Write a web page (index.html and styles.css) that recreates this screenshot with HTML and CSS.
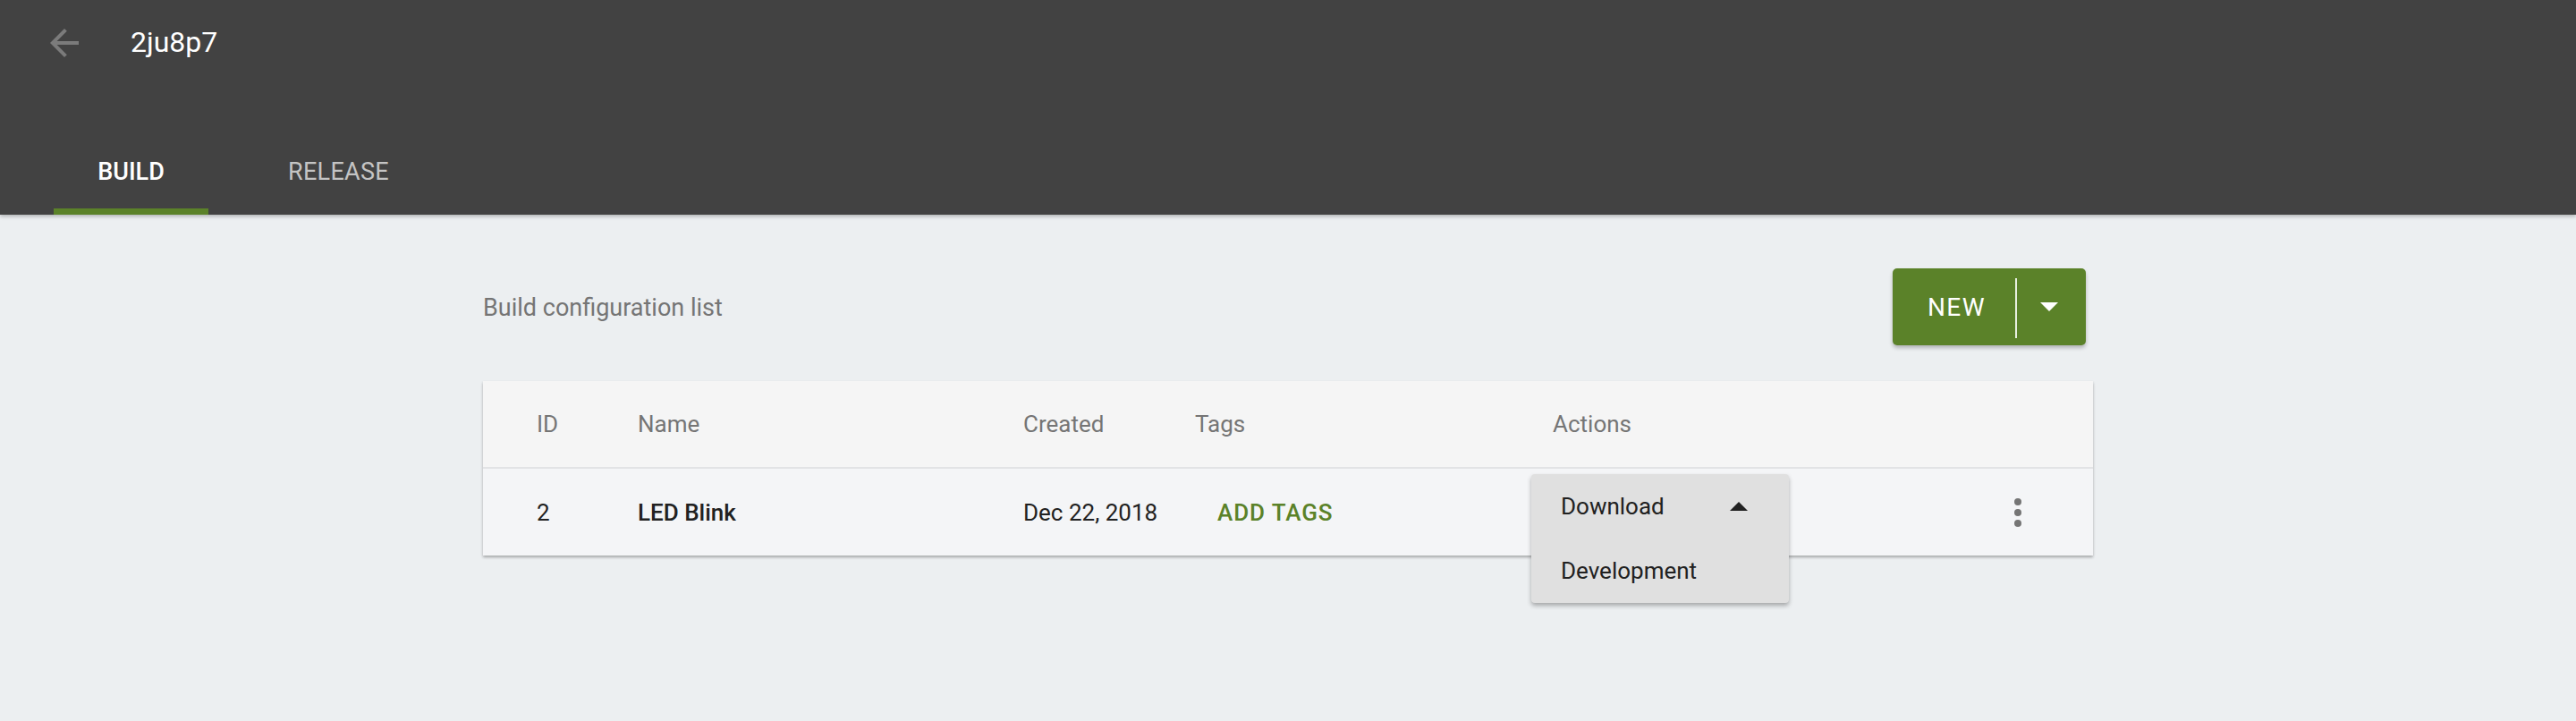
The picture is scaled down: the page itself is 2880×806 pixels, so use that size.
FILE: index.html
```html
<!DOCTYPE html>
<html lang="en">
<head>
  <meta charset="UTF-8">
  <title>2ju8p7 - Build</title>
  <link rel="stylesheet" href="styles.css">
</head>
<body>
  <header class="appbar">
    <div class="toolbar">
      <button class="back" aria-label="Back">
        <svg viewBox="0 0 24 24" width="48" height="48"><path d="M20 11H7.83l5.59-5.59L12 4l-8 8 8 8 1.41-1.41L7.83 13H20v-2z"/></svg>
      </button>
      <span class="title">2ju8p7</span>
    </div>
    <nav class="tabs">
      <a class="tab active">BUILD</a>
      <a class="tab">RELEASE</a>
    </nav>
  </header>

  <main class="content">
    <div class="list-head">
      <span class="list-title">Build configuration list</span>
      <div class="split-btn">
        <button class="split-main">NEW</button>
        <span class="split-divider"></span>
        <button class="split-caret" aria-label="More">
          <svg viewBox="0 0 20 10" width="20" height="10"><path d="M0 0h20L10 10z"/></svg>
        </button>
      </div>
    </div>

    <div class="card">
      <div class="grid head">
        <div>ID</div>
        <div>Name</div>
        <div>Created</div>
        <div>Tags</div>
        <div>Actions</div>
        <div></div>
      </div>
      <div class="grid row">
        <div>2</div>
        <div class="name">LED Blink</div>
        <div>Dec 22, 2018</div>
        <div><button class="text-btn">ADD TAGS</button></div>
        <div class="actions">
          <div class="menu">
            <div class="menu-item">
              <span>Download</span>
              <svg viewBox="0 0 20 10" width="20" height="10"><path d="M10 0l10 10H0z"/></svg>
            </div>
            <div class="menu-item">Development</div>
          </div>
        </div>
        <div class="more">
          <span class="dot"></span><span class="dot"></span><span class="dot"></span>
        </div>
      </div>
    </div>
  </main>
</body>
</html>
```

FILE: styles.css
```css
body {
  margin: 0;
  font-family: Roboto, 'Noto Sans', sans-serif;
  background: #eceff1;
  height: 806px;
  overflow: hidden;
}

button {
  font-family: inherit;
  border: none;
  background: none;
  padding: 0;
  cursor: pointer;
}

.appbar {
  background: #424242;
  height: 240px;
  box-shadow: 0 2px 4px rgba(0, 0, 0, 0.25);
  position: relative;
  z-index: 1;
}

.toolbar {
  display: flex;
  align-items: center;
  height: 96px;
}

.back {
  margin-left: 48px;
  width: 48px;
  height: 48px;
  fill: #7b7b7b;
}

.back svg {
  display: block;
}

.title {
  margin-left: 50px;
  color: #ffffff;
  font-size: 32px;
  margin-top: -2px;
}

.tabs {
  display: flex;
  margin-top: 48px;
  height: 96px;
}

.tab {
  display: flex;
  align-items: center;
  justify-content: center;
  height: 82px;
  padding-top: 7px;
  font-size: 27px;
  color: #c4c4c4;
  border-bottom: 7px solid transparent;
}

.tab.active {
  width: 173px;
  margin-left: 60px;
  color: #ffffff;
  font-weight: 500;
  border-bottom-color: #5b8229;
}

.tab:nth-child(2) {
  margin-left: 89px;
  letter-spacing: 0.3px;
}

.content {
  width: 1800px;
  margin: 0 auto;
}

.list-head {
  display: flex;
  justify-content: space-between;
  align-items: center;
  padding: 60px 0 40px;
}

.list-title {
  font-size: 27px;
  color: #757575;
  margin-top: 2px;
}

.split-btn {
  display: flex;
  align-items: center;
  height: 86px;
  margin-right: 8px;
  background: #5b8229;
  border-radius: 5px;
  box-shadow: 0 3px 4px rgba(0, 0, 0, 0.25);
}

.split-main {
  width: 137px;
  height: 100%;
  color: #ffffff;
  font-size: 28px;
  letter-spacing: 1.5px;
  padding-left: 6px;
}

.split-divider {
  width: 2px;
  height: 67px;
  margin-top: 3px;
  background: #e8efe0;
}

.split-caret {
  width: 77px;
  height: 100%;
  fill: #ffffff;
  display: flex;
  align-items: center;
  justify-content: center;
  padding-right: 6px;
}

.card {
  background: #f4f5f7;
  box-shadow: 0 2px 3px rgba(0, 0, 0, 0.3);
}

.grid {
  display: grid;
  grid-template-columns: 113px 431px 192px 400px 1fr 200px;
  align-items: center;
  padding-left: 60px;
  font-size: 26px;
}

.head {
  height: 96px;
  background: #f5f5f5;
  color: #757575;
  border-bottom: 2px solid #e2e3e5;
}

.row {
  height: 97px;
  color: #212121;
}

.name {
  font-weight: 500;
}

.text-btn {
  color: #5b8229;
  font-size: 26px;
  font-weight: 500;
  letter-spacing: 0.9px;
  padding: 0 29px 0 25px;
}

.actions {
  position: relative;
  height: 100%;
}

.menu {
  position: absolute;
  left: -24px;
  top: 6px;
  width: 288px;
  background: #e0e0e0;
  border-radius: 4px;
  box-shadow: 0 3px 5px rgba(0, 0, 0, 0.3);
  z-index: 2;
}

.menu-item {
  display: flex;
  align-items: center;
  justify-content: space-between;
  height: 72px;
  padding: 0 46px 0 33px;
  font-size: 26px;
  color: #212121;
  fill: #212121;
}

.more {
  display: flex;
  flex-direction: column;
  align-items: center;
  gap: 4px;
  width: 8px;
  margin-left: 112px;
}

.dot {
  width: 8px;
  height: 8px;
  border-radius: 50%;
  background: #757575;
}
```
